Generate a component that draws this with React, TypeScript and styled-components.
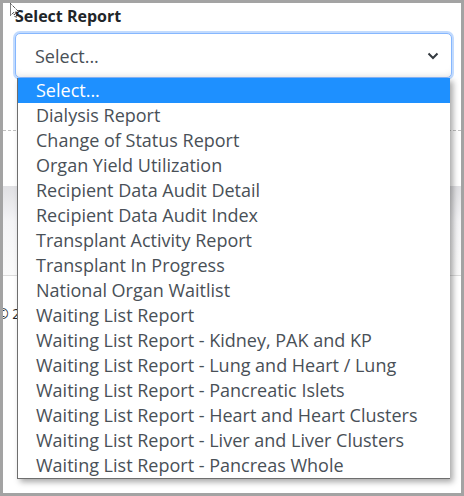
import React from "react";
import styled, { createGlobalStyle } from "styled-components";

const GlobalStyle = createGlobalStyle`
  html, body { margin: 0; padding: 0; background: #a3a3a3; }
  * { box-sizing: border-box; }
`;

const Frame = styled.div`
  position: relative;
  width: 464px;
  height: 496px;
  border: 3px solid #a3a3a3;
  background: #ffffff;
  overflow: hidden;
  font-family: "Open Sans", "Noto Sans", sans-serif;
`;

const Page = styled.div`
  display: flex;
  flex-direction: column;
  padding: 2px 9px 0 12px;
`;

const Label = styled.label`
  font-size: 16px;
  font-weight: 700;
  color: #212529;
  line-height: 22px;
  margin-bottom: 6px;
`;

const SelectBox = styled.div`
  display: flex;
  align-items: center;
  justify-content: space-between;
  height: 45px;
  padding: 0 12px 0 19px;
  border: 1px solid #86b7fe;
  border-radius: 5px;
  box-shadow: 0 0 0 2px #c2dbfe, inset 0 -6px 6px -4px rgba(0, 0, 0, 0.08);
  color: #495057;
  font-size: 18px;
  background: #fff;
`;

const Backdrop = styled.div`
  display: flex;
  flex-direction: column;
  margin: 0 -9px 0 -12px;
`;

const Dashed = styled.div`
  margin-top: 52px;
  border-top: 1px dashed #c0c0c0;
`;

const Band = styled.div`
  margin-top: 55px;
  height: 90px;
  background: linear-gradient(#e0e0e3, #f4f4f6 40%, #fafafa);
  border-bottom: 1px solid #dcdcdc;
`;

const Footer = styled.div`
  margin-top: 28px;
  font-size: 14px;
  color: #212529;
  margin-left: -6px;
`;

const List = styled.ul`
  position: absolute;
  left: 14px;
  top: 75px;
  width: 433px;
  margin: 0;
  padding: 0;
  list-style: none;
  background: #fff;
  border-left: 1px solid #6e6e6e;
  border-bottom: 1px solid #6e6e6e;
  box-shadow: 3px 3px 6px rgba(0, 0, 0, 0.35);
`;

const Item = styled.li<{ $active?: boolean }>`
  height: 25px;
  line-height: 25px;
  padding-left: 18px;
  font-size: 18px;
  white-space: nowrap;
  color: ${(p) => (p.$active ? "#ffffff" : "#495057")};
  background: ${(p) => (p.$active ? "#1e90ff" : "transparent")};
`;

const Cursor = styled.svg`
  position: absolute;
  left: 7px;
  top: 0px;
`;

const options = [
  "Select...",
  "Dialysis Report",
  "Change of Status Report",
  "Organ Yield Utilization",
  "Recipient Data Audit Detail",
  "Recipient Data Audit Index",
  "Transplant Activity Report",
  "Transplant In Progress",
  "National Organ Waitlist",
  "Waiting List Report",
  "Waiting List Report - Kidney, PAK and KP",
  "Waiting List Report - Lung and Heart / Lung",
  "Waiting List Report - Pancreatic Islets",
  "Waiting List Report - Heart and Heart Clusters",
  "Waiting List Report - Liver and Liver Clusters",
  "Waiting List Report - Pancreas Whole",
];

export default function App() {
  return (
    <>
      <GlobalStyle />
      <Frame>
        <Page>
          <Label>Select Report</Label>
          <SelectBox>
            <span>Select...</span>
            <svg width="12" height="8" viewBox="0 0 12 8">
              <path d="M1.5 1.5 L6 6 L10.5 1.5" fill="none" stroke="#343a40" strokeWidth="2" />
            </svg>
          </SelectBox>
          <Backdrop>
            <Dashed />
            <Band />
            <Footer>© 2024</Footer>
          </Backdrop>
        </Page>
        <List>
          {options.map((o, i) => (
            <Item key={o} $active={i === 0}>
              {o}
            </Item>
          ))}
        </List>
        <Cursor width="10" height="16" viewBox="0 0 10 16">
          <path d="M0.5 0.5 L0.5 12.5 L3.5 9.5 L5.5 14.5 L7 13.8 L5 9 L9 9 Z" fill="#fff" stroke="#000" strokeWidth="1" strokeDasharray="1 1" />
        </Cursor>
      </Frame>
    </>
  );
}
